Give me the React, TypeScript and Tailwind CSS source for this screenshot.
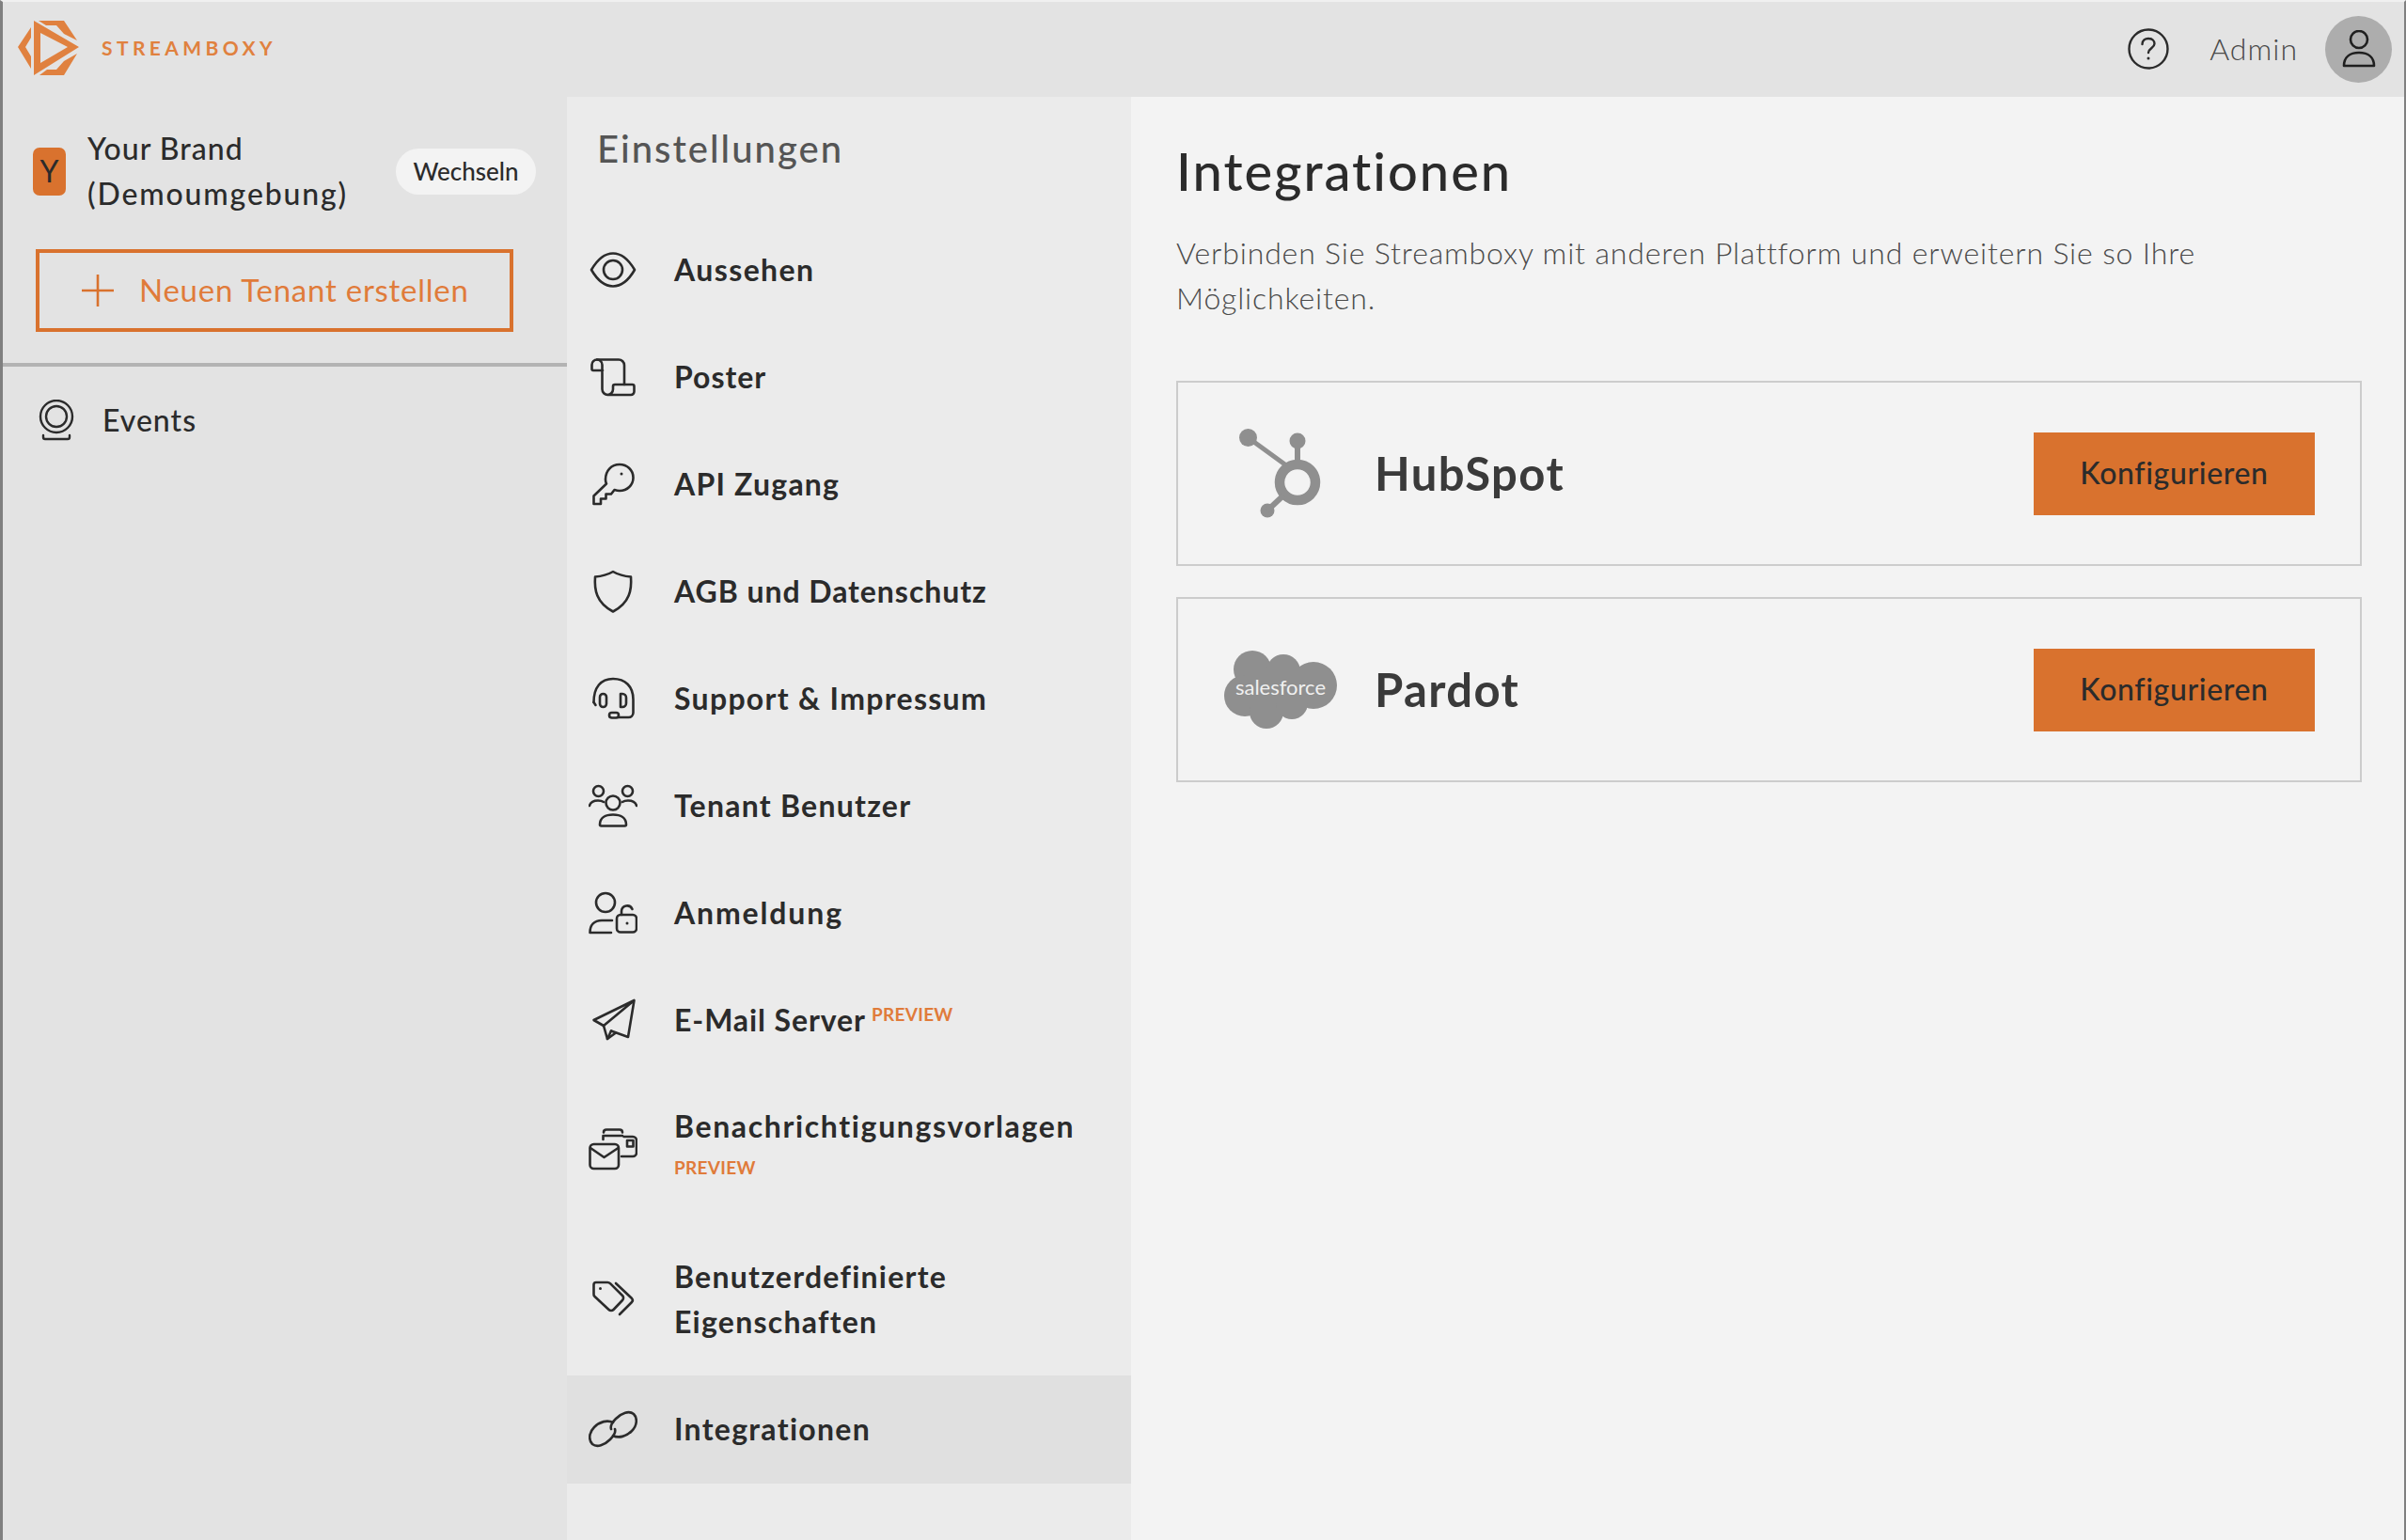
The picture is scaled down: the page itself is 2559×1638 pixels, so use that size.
import React from 'react';

const ink = '#2b2b2b';

const Line: React.FC<{ w?: number; h?: number; box?: string; sw?: number; children: React.ReactNode }> = ({ w = 52, h = 48, box = '-2 0 52 48', sw = 2.6, children }) => (
  <svg width={w} height={h} viewBox={box} fill="none" stroke={ink} strokeWidth={sw} strokeLinecap="round" strokeLinejoin="round">
    {children}
  </svg>
);

const EyeIcon = () => (
  <Line>
    <path d="M1 24 C8 12 15 6.500 24 6.500 S40 12 47 24 C40 36 33 41.500 24 41.500 S8 36 1 24 Z" />
    <circle cx="24" cy="24" r="10" />
  </Line>
);
const ScrollIcon = () => (
  <Line>
    <path d="M13 17 H3 a1.500 1.500 0 0 1 -1.500 -1.500 V11 a5.500 5.500 0 0 1 11 0 V37 a6 6 0 0 0 6 6 H43 a3.500 3.500 0 0 0 3.500 -3.500 V34 a2 2 0 0 0 -2 -2 H26 a2 2 0 0 0 -2 2 V37 a6 6 0 0 1 -6 6" />
    <path d="M7 5.500 H30 a6 6 0 0 1 6 6 V32" />
  </Line>
);
const KeyIcon = () => (
  <Line>
    <path d="M16 19 C16 10 22 3 31 3 C39 3 45.500 9 45.500 17 C45.500 25 39 31 31 31 C29 31 27 30.500 25.500 30 L22 34.500 H16.500 V39.500 H11 V45 H3.500 V36.500 L17 23.500 C16.300 22 16 20.500 16 19 Z" />
    <circle cx="33" cy="13" r="1.500" fill={ink} stroke="none" />
  </Line>
);
const ShieldIcon = () => (
  <Line>
    <path d="M24 3 C30 6.500 36 8 43 8.500 C44 22 42 36 24 45.500 C6 36 4 22 5 8.500 C12 8 18 6.500 24 3 Z" />
  </Line>
);
const HeadsetIcon = () => (
  <Line>
    <path d="M3.500 28 C3.500 12 11 3 24 3 C37 3 45.500 11 45.500 25 V39 a5 5 0 0 1 -5 5 H29" />
    <path d="M3.500 28 L5.500 31" />
    <rect x="10" y="19" width="7" height="14" rx="3.500" />
    <path d="M32 19 h2 a4 4 0 0 1 4 4 v6 a4 4 0 0 1 -4 4 h-2 Z" />
    <rect x="20" y="39" width="10" height="5.500" rx="2.700" />
  </Line>
);
const UsersIcon = () => (
  <Line box="0 0 52 48">
    <circle cx="26" cy="21" r="7.500" />
    <circle cx="10.500" cy="8.500" r="5.500" />
    <circle cx="41.500" cy="8.500" r="5.500" />
    <path d="M12 44 C12 37 18 33.500 26 33.500 S40 37 40 44 a1.500 1.500 0 0 1 -1.500 1.500 H13.500 A1.500 1.500 0 0 1 12 44 Z" />
    <path d="M1 24 C2 20 5 18.500 10 18.500 C12.500 18.500 14.500 19 16 20" />
    <path d="M51 24 C50 20 47 18.500 42 18.500 C39.500 18.500 37.500 19 36 20" />
  </Line>
);
const UserLockIcon = () => (
  <Line box="0 0 52 48">
    <circle cx="18" cy="13" r="10" />
    <path d="M25 32 H14 C6 32 1.500 37 1.500 45 H24" />
    <rect x="30" y="26" width="21" height="18.500" rx="4" />
    <path d="M35 26 V22 a6 6 0 0 1 11.500 -2" />
    <circle cx="41" cy="35" r="1.500" fill={ink} stroke="none" />
  </Line>
);
const PlaneIcon = () => (
  <Line>
    <path d="M46.500 3 L3.500 24 L14 30 L46.500 3 L40 42 L22 35.500" />
    <path d="M14 30 L18 44 L27 37.500" />
    <path d="M22 35.500 L18 44" />
  </Line>
);
const MailCardIcon = () => (
  <Line box="0 0 52 48">
    <rect x="1.500" y="19" width="30.500" height="26" rx="4" />
    <path d="M2 23 L16.500 33 L31.500 23" />
    <path d="M15.500 14 V10 H36" />
    <path d="M16 6.500 C16 4.500 17 3.500 19 3.500 H33 C35 3.500 36 4.500 36 6.500" />
    <path d="M37.500 11 H47 a4 4 0 0 1 4 4 V28 a4 4 0 0 1 -4 4 H35" />
    <rect x="41" y="15" width="6.500" height="6.500" />
  </Line>
);
const TagIcon = () => (
  <Line>
    <path d="M6 6 H18 a4 4 0 0 1 3 1.200 L34 20 a3.500 3.500 0 0 1 0 5 L24.500 35 a3.500 3.500 0 0 1 -5 0 L4.500 21 a3 3 0 0 1 -1 -2.500 V8.500 A2.500 2.500 0 0 1 6 6 Z" />
    <path d="M27 7 L44 23 a3 3 0 0 1 0 4 L31 40" />
    <circle cx="10.500" cy="12.500" r="1.500" fill={ink} stroke="none" />
  </Line>
);
const LinkIcon = () => (
  <Line box="0 0 52 48">
    <path d="M26 17 C20 14 12 16 6 22 C0 28 0 36 4 40 C9 44 17 41 23 35 C27 31 29 27 28 24" />
    <path d="M26 31 C32 34 40 32 46 26 C52 20 52 12 48 8 C43 4 35 7 29 13 C25 17 23 21 24 24" />
  </Line>
);
const WebcamIcon = () => (
  <svg width="38" height="44" viewBox="0 0 38 44" fill="none" stroke={ink} strokeWidth="2.4" strokeLinecap="round">
    <circle cx="19" cy="18" r="17" />
    <circle cx="19" cy="18" r="11" />
    <path d="M5 38 V40 a2 2 0 0 0 2 2 H31 a2 2 0 0 0 2 -2 V38" />
  </svg>
);

const Logo = () => (
  <svg width="66" height="58" viewBox="0 0 66 58" fill="#e0813f" className="shrink-0">
    <path fillRule="evenodd" d="M17 0 L65 28 L17 58 Z M24 13 V45 L53 28 Z" />
    <path d="M22 0 H49 L63 21 L49 14 L41 5 H30 Z" />
    <path d="M23 58 H49 L63 35 L49 43 L41 52 H31 Z" />
    <path d="M14 7 V18 L8 28 L14 38 V51 L0 28 Z" />
  </svg>
);

const HubSpotLogo = () => (
  <svg width="88" height="98" viewBox="0 0 88 98" fill="#8f8f8f" stroke="#8f8f8f">
    <circle cx="62" cy="58" r="19" fill="none" strokeWidth="10.500" />
    <circle cx="62" cy="14" r="8.500" stroke="none" />
    <path d="M62 14 V36" strokeWidth="6" />
    <circle cx="9.500" cy="10.500" r="9.500" stroke="none" />
    <path d="M9.500 10.500 L50 40" strokeWidth="5" />
    <circle cx="30" cy="88" r="7.500" stroke="none" />
    <path d="M30 88 L47 72" strokeWidth="6" />
  </svg>
);

const SalesforceLogo = () => (
  <svg width="120" height="84" viewBox="0 0 120 84" fill="#8f8f8f">
    <circle cx="30" cy="20" r="20" />
    <circle cx="63" cy="22" r="18" />
    <circle cx="95" cy="37" r="25" />
    <circle cx="22" cy="48" r="22" />
    <circle cx="45" cy="65" r="18" />
    <circle cx="72" cy="56" r="17" />
    <rect x="22" y="20" width="70" height="36" />
    <text x="60" y="47" textAnchor="middle" fill="#f0f0f0" fontSize="22" fontFamily="Lato, sans-serif">salesforce</text>
  </svg>
);

const Preview: React.FC<{ className?: string }> = ({ className = '' }) => (
  <span className={`text-[19px] leading-[24px] font-bold tracking-[0.3px] text-[#e07b3a] ${className}`}>PREVIEW</span>
);

type NavItem = { label: React.ReactNode; icon: React.ReactNode; h: string; track: string; active?: boolean };

const nav: NavItem[] = [
  { label: 'Aussehen', icon: <EyeIcon />, h: 'h-[114px]', track: 'tracking-[1.400px]' },
  { label: 'Poster', icon: <ScrollIcon />, h: 'h-[114px]', track: 'tracking-[1px]' },
  { label: 'API Zugang', icon: <KeyIcon />, h: 'h-[114px]', track: 'tracking-[1.200px]' },
  { label: 'AGB und Datenschutz', icon: <ShieldIcon />, h: 'h-[114px]', track: 'tracking-[0.950px]' },
  { label: 'Support & Impressum', icon: <HeadsetIcon />, h: 'h-[114px]', track: 'tracking-[1.300px]' },
  { label: 'Tenant Benutzer', icon: <UsersIcon />, h: 'h-[114px]', track: 'tracking-[1.250px]' },
  { label: 'Anmeldung', icon: <UserLockIcon />, h: 'h-[114px]', track: 'tracking-[1.850px]' },
  {
    label: (
      <span className="flex items-start">
        E-Mail Server
        <Preview className="ml-[6px] mt-[6px]" />
      </span>
    ),
    icon: <PlaneIcon />,
    h: 'h-[114px]',
    track: 'tracking-[0.900px]',
  },
  {
    label: (
      <span className="flex flex-col items-start -mt-[15px]">
        Benachrichtigungsvorlagen
        <Preview className="mt-[8px]" />
      </span>
    ),
    icon: <MailCardIcon />,
    h: 'h-[159px]',
    track: 'tracking-[1.630px]',
  },
  { label: <>Benutzerdefinierte<br />Eigenschaften</>, icon: <TagIcon />, h: 'h-[162px]', track: 'tracking-[1.250px]' },
  { label: 'Integrationen', icon: <LinkIcon />, h: 'h-[115px]', track: 'tracking-[1.300px]', active: true },
];

const integrations = [
  { name: 'HubSpot', logo: <HubSpotLogo /> },
  { name: 'Pardot', logo: <SalesforceLogo /> },
];

export default function App() {
  return (
    <div className="flex flex-col w-[2559px] h-[1638px] overflow-hidden border-l-[3px] border-r-[2px] border-l-[#808080] border-r-[#808080] border-t-[2px] border-t-[#f0f0f0] bg-[#f3f3f3] font-['Lato',sans-serif] text-[#2b2b2b]">
      {/* Top bar */}
      <header className="flex items-center justify-between h-[101px] shrink-0 bg-[#e3e3e3] pl-[16px] pr-[13px]">
        <div className="flex items-center gap-[23px] -mt-[3px]">
          <Logo />
          <span className="text-[21px] font-bold tracking-[4.400px] text-[#e0813f]">STREAMBOXY</span>
        </div>
        <div className="flex items-center -mt-[1px]">
          <svg width="44" height="44" viewBox="0 0 44 44" fill="none" stroke={ink} strokeWidth="2.400" strokeLinecap="round">
            <circle cx="22" cy="22" r="20.500" />
            <path d="M15.500 17 C15.500 13 18.500 11 22 11 C26 11 28.500 13.500 28.500 16.500 C28.500 21 22 21.500 22 26" />
            <circle cx="22" cy="32" r="1.500" fill={ink} stroke="none" />
          </svg>
          <span className="ml-[43px] text-[32px] font-light tracking-[1px] text-[#4a4a4a]">Admin</span>
          <div className="ml-[29px] flex items-center justify-center w-[71px] h-[71px] rounded-full bg-[#adadad]">
            <svg width="36" height="40" viewBox="0 0 36 40" fill="none" stroke="#1f1f1f" strokeWidth="2.600">
              <circle cx="18" cy="10" r="9" />
              <path d="M2 38 C2 29 8 24 18 24 S34 29 34 38 Z" strokeLinejoin="round" />
            </svg>
          </div>
        </div>
      </header>

      <div className="flex flex-1 min-h-0">
        {/* Tenant sidebar */}
        <aside className="w-[600px] shrink-0 bg-[#e3e3e3]">
          <div className="h-[287px] border-b-[4px] border-[#b3b3b3] pl-[32px] pr-[33px] pt-[31px]">
            <div className="flex items-center justify-between">
              <div className="flex items-center gap-[23px]">
                <div className="flex items-center justify-center w-[35px] h-[51px] rounded-[7px] bg-[#d9722e] text-[32px] text-[#2b2b2b]">Y</div>
                <div className="text-[32px] leading-[48px] font-medium">
                  <div className="tracking-[1px]">Your Brand</div>
                  <div className="tracking-[1.850px]">(Demoumgebung)</div>
                </div>
              </div>
              <button className="flex items-center justify-center w-[149px] h-[49px] rounded-full bg-[#f3f3f3] text-[26px] font-medium">Wechseln</button>
            </div>
            <button className="flex items-center w-[508px] h-[88px] mt-[35px] ml-[3px] border-[4px] border-[#d9722e] pl-[45px] text-[33px] tracking-[0.750px] text-[#e07b3a]">
              <svg width="34" height="34" viewBox="0 0 34 34" stroke="#d9722e" strokeWidth="2.600" className="shrink-0">
                <path d="M17 0 V34 M0 17 H34" />
              </svg>
              <span className="ml-[27px]">Neuen Tenant erstellen</span>
            </button>
          </div>
          <div className="flex items-center h-[114px] pl-[38px] gap-[30px] text-[32px] font-medium tracking-[1px]">
            <WebcamIcon />
            Events
          </div>
        </aside>

        {/* Settings menu */}
        <nav className="w-[600px] shrink-0 bg-[#ebebeb]">
          <div className="flex items-center h-[127px] pl-[32px] pb-[18px] text-[40px] font-medium tracking-[2px] text-[#555555]">Einstellungen</div>
          {nav.map((item, i) => (
            <div key={i} className={`flex items-center ${item.h} pl-[23px] gap-[39px] ${item.active ? 'bg-[#e0e0e0] pb-[2px]' : ''}`}>
              <span className="shrink-0 flex">{item.icon}</span>
              <span className={`text-[32px] leading-[48px] font-bold ${item.track}`}>{item.label}</span>
            </div>
          ))}
        </nav>

        {/* Content */}
        <main className="flex-1 pl-[48px] pr-[45px] pt-[43px]">
          <h1 className="text-[56px] leading-[72px] font-medium tracking-[2px]">Integrationen</h1>
          <p className="mt-[27px] text-[32px] leading-[48px] font-light tracking-[0.840px] text-[#4a4a4a]">
            Verbinden Sie Streamboxy mit anderen Plattform und erweitern Sie so Ihre<br />Möglichkeiten.
          </p>
          <div className="flex flex-col gap-[33px] mt-[64px]">
            {integrations.map((it) => (
              <div key={it.name} className="flex items-center h-[197px] border-[2px] border-[#cccccc] pl-[49px] pr-[48px]">
                <div className="flex items-center justify-center w-[120px] shrink-0">{it.logo}</div>
                <div className="ml-[40px] flex-1 text-[49px] font-bold tracking-[1.400px] text-[#3a3a3a]">{it.name}</div>
                <button className="w-[299px] h-[88px] pb-[2px] bg-[#d9722e] text-[32px] font-medium tracking-[0.630px] text-[#2b2b2b]">Konfigurieren</button>
              </div>
            ))}
          </div>
        </main>
      </div>
    </div>
  );
}
